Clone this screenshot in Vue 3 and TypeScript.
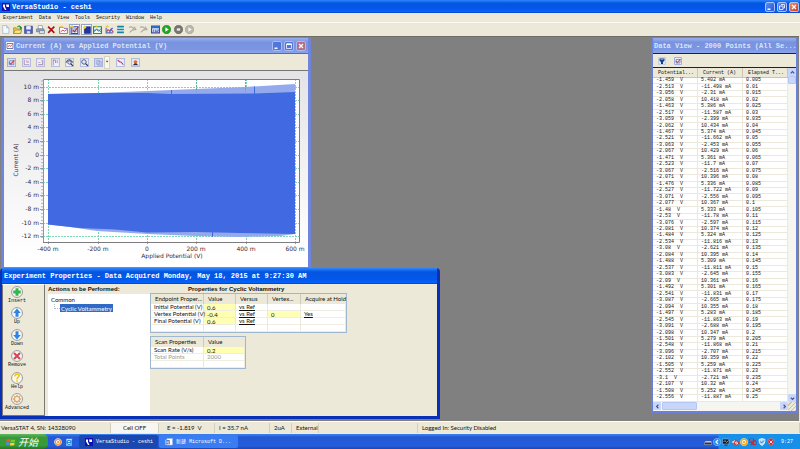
<script setup lang="ts">
import { h, type FunctionalComponent } from 'vue'

type Shape = [d: string, fill: string, stroke?: string, width?: number]

const icons: Record<string, Shape[]> = {
  new: [['M3 1h7l4 4v10H3z', '#f4f8ff', '#8fa3c4'], ['M10 1v4h4', '#c9d8ee', '#8fa3c4']],
  open: [['M1 5h5l2 2h6v8H1z', '#e8c84a', '#8a7420'], ['M4 9h12l-3 6H1z', '#ffe67a', '#8a7420'], ['M8 4c2-4 6-2 6 2m-2-2l2 3 2-3', 'none', '#2b8c2b', 2]],
  save: [['M1 2h14v13H1z', '#4f5fc4', '#2b3580'], ['M4 2h8v6H4z', '#eef2ff'], ['M5 11h6v4H5z', '#dfe4f5']],
  print: [['M4 1h7l1 6H4z', '#fff', '#6a7390'], ['M1 7h13v5H1z', '#9eaed0', '#4b5678'], ['M6 10h9v5H6z', '#dfe8fa', '#4b5678']],
  delete: [['M2 3l11 11M13 3L2 14', 'none', '#b01018', 3]],
  folder: [['M1 4h6l2 2h6v9H1z', '#fff', '#8a5ab0', 1.5], ['M3 12l4-3 3 2 4-3', 'none', '#c03030', 1.5], ['M1 4l4-3 3 3', '#e8cf32']],
  edit: [['M2 3h12v12H2z', '#fff', '#31459c', 2], ['M5 3v12M9 3v12M2 7h12M2 11h12', 'none', '#5a6cc0'], ['M5 9l3 3 7-9', 'none', '#c82828', 2], ['M0 2l4-2 3 3-4 2z', '#e8cf32']],
  sheet: [['M4 3h11v12H4z', '#2334a0', '#151f6c'], ['M1 4l4-4 3 4-3 3z', '#f4dc30']],
  graph: [['M1 3h14v12H1z', '#e8fff0', '#258a50', 2], ['M2 12l4-4 4 3 5-5', 'none', '#c03030', 1.5], ['M2 10l5-3 7 5', 'none', '#2878c8', 1.5], ['M5 0l4 2-4 2z', '#e8cf32']],
  curves: [['M2 5v9h12', 'none', '#5a6ac0', 2], ['M3 12c3-9 5 4 8-4l4 5', 'none', '#c83858', 2], ['M8 14c1-6 3-8 6-8', 'none', '#4070d0', 2], ['M1 2l4-2 2 4-4 1z', '#e8cf32']],
  rows: [['M2 1h12v14H2z', '#e2f5f8'], ['M2 3h12M2 8h12M2 13h12', 'none', '#17829c', 3]],
  tool: [['M2 4c4-2 8 1 9 4M11 3l3 5-5 1M3 13l6-5', 'none', '#aaa8a0', 2]],
  panel: [['M1 2h14v12H1z', '#fff', '#2850b0', 2], ['M1 2h14v4H1z', '#3268c8'], ['M3 8h3v2H3zM7 8h3v2H7zM11 8h3v2h-3zM3 11h3v2H3z', '#3268c8'], ['M7 11h6v2H7z', '#d03838']],
  play: [['M8 .5a7.5 7.5 0 1 0 .1 0z', '#22a522', '#167516'], ['M6 4l6 4-6 4z', '#fff']],
  stop: [['M8 .5a7.5 7.5 0 1 0 .1 0z', '#77756f', '#5a5852'], ['M5 6h6v4H5z', '#eee']],
  next: [['M8 .5a7.5 7.5 0 1 0 .1 0z', '#b9b7ae', '#9c9a92'], ['M6 4l6 4-6 4z', '#f7f6f0']],
  check: [['M1 1h14v14H1z', '#eaf0ff', '#9fb0dc', 2], ['M4 5h8v7H4z', 'none', '#6078c0', 1.5], ['M4 8l3 3 6-7', 'none', '#d8483c', 2.2]],
  axis: [['M1 1h14v14H1z', '#eef0fc', '#b2bce0', 2], ['M4 3v9h9', 'none', '#a080b0', 1.5], ['M7 5h2v4M11 5v4', 'none', '#d09098', 1.5]],
  axisr: [['M1 1h14v14H1z', '#eef0fc', '#b2bce0', 2], ['M4 12h8V4', 'none', '#a06890', 1.5], ['M4 8h4M9 5h2', 'none', '#c898a8', 1.5]],
  axisl: [['M1 1h14v14H1z', '#eef0fc', '#b2bce0', 2], ['M4 3v10M4 4h4v5M11 4v5', 'none', '#b07898', 1.5]],
  zoom: [['M1 1h14v14H1z', '#eef0fc', '#b2bce0', 2], ['M7 3a4 4 0 1 0 .1 0z', '#dce6fa', '#404860', 1.5], ['M10 10l4 4', 'none', '#303848', 2.5]],
  zoomx: [['M1 1h14v14H1z', '#eef0fc', '#b2bce0', 2], ['M2 8c4-8 8-5 12 0', 'none', '#405060', 2], ['M8 5a3 3 0 1 0 .1 0z', '#dce6fa', '#404860', 1.5], ['M10 10l4 4', 'none', '#303848', 2.5]],
  copy: [['M1 1h14v14H1z', '#dde4f8', '#a8b4e0', 2], ['M4 4h6v7H4zM7 6h6v7H7z', '#ccd7f3', '#8194c8']],
  line: [['M1 1h14v14H1z', '#eef0fc', '#b2bce0', 2], ['M3 4l4 3 2 0 4 5', 'none', '#c83858', 2]],
  peak: [['M1 1h14v14H1z', '#eef0fc', '#b2bce0', 2], ['M2 13c3 0 4-5 6-5s3 5 6 5z', '#30303a'], ['M4 7c2-4 6-4 8 0l-4 3z', '#e07030']],
  filter: [['M1 1h14v14H1z', '#d7e5fa', '#a8b9dc'], ['M3 3h10v4l-3 3v4H6v-4L3 7z', '#163e88'], ['M5 4h6v2H5z', '#4aa0d8']],
  chart: [['M1 1h14v14H1z', '#fff', '#fff', 2], ['M2 3h12v10H2z', '#fff', '#405090', 1.5], ['M4 10l3-4 2 3 4-4', 'none', '#d04040', 1.5]],
  versa: [['M0 0h16v16H0z', '#1010b4'], ['M2 3h4v5l3 6H6L2 7zM8 3h6v5H9z', '#fff']],
  insert: [['M8 .8a7.2 7.2 0 1 0 .1 0z', '#f6f6f4', '#8b8b92', 1.2], ['M6 3h4v3h3v4h-3v3H6v-3H3V6h3z', '#35b648']],
  up: [['M8 .8a7.2 7.2 0 1 0 .1 0z', '#f6f6f4', '#8b8b92', 1.2], ['M8 2l5 6h-3v5H6V8H3z', '#2c86e8']],
  down: [['M8 .8a7.2 7.2 0 1 0 .1 0z', '#f6f6f4', '#8b8b92', 1.2], ['M8 14l5-6h-3V3H6v5H3z', '#2c86e8']],
  remove: [['M8 .8a7.2 7.2 0 1 0 .1 0z', '#f6f6f4', '#8b8b92', 1.2], ['M4 4l8 8M12 4l-8 8', 'none', '#d84450', 2.8]],
  help: [['M8 .8a7.2 7.2 0 1 0 .1 0z', '#fbfae8', '#8b8b92', 1.2], ['M5 6c0-4 6-4 6-1 0 2-3 2-3 5M8 11v2', 'none', '#f0c41c', 2]],
  advanced: [['M8 .8a7.2 7.2 0 1 0 .1 0z', '#f6f6f4', '#8b8b92', 1.2], ['M8 4.5a3.5 3.5 0 1 0 .1 0zM8 2.5v2M8 11.5v2M2.5 8h2M11.5 8h2M4 4l1.5 1.5M12 4l-1.5 1.5M4 12l1.5-1.5M12 12l-1.5-1.5', '#fff1dc', '#e0a868', 1.8]],
  min: [['M3 11h6v3H3z', '#fff']],
  max: [['M3 4h10v9H3z', 'none', '#fff', 1.5], ['M3 3h10v3H3z', '#fff']],
  restore: [['M6 3h7v7h-2M3 6h7v7H3z', 'none', '#fff', 1.6]],
  close: [['M4 4l8 8M12 4l-8 8', 'none', '#fff', 2.4]],
  left: [['M10 4L6 8l4 4', 'none', '#3c5488', 2.6]],
  right: [['M6 4l4 4-4 4', 'none', '#3c5488', 2.6]],
  upward: [['M4 10l4-4 4 4', 'none', '#3c5488', 2.6]],
  downward: [['M4 6l4 4 4-4', 'none', '#3c5488', 2.6]],
  flag: [['M1 4c3-2 4-1 6 0L6 8c-2-1-4-1-6 0z', '#f05a28'], ['M8 4c3 1 5 1 7 0l-1 4c-2 1-4 1-7 0z', '#7cc832'], ['M0 9c2-1 4-1 6 0l-1 4c-2-1-4-1-6 0z', '#4a90f0'], ['M7 9c3 1 4 1 7 0l-1 4c-3 1-5 1-7 0z', '#fcd030']],
  media: [['M8 1a7 7 0 1 0 .1 0z', '#f08c28', '#fff', 1.2], ['M8 4a4 4 0 1 0 .1 0z', '#fff'], ['M7 5l4 3-4 3z', '#e07018']],
  ie: [['M3 2h10v13H3z', '#e8f4ff', '#90b8e8'], ['M12 9H4c0-6 8-6 8 0M4 9c0 5 6 5 8 2', 'none', '#1a88d8', 2.2], ['M12 2l3-1-2 3', '#f8e060']],
  word: [['M4 1h11v13H4z', '#fff', '#9fb4dc'], ['M1 4h9v9H1z', '#2e59b4', '#fff'], ['M3 6l1 5 1.5-4L7 11l1-5', 'none', '#fff', 1.2]],
  keyboard: [['M2 6h13v3H2z', '#e8e8e8', '#555'], ['M1 9h14v4H1z', '#303030', '#bbb']],
  hide: [['M8 .5a7.5 7.5 0 1 0 .1 0z', '#2c8cf0', '#9cd4ff'], ['M10 4L6 8l4 4', 'none', '#fff', 2.4]],
  monitor: [['M1 2h13v10H1z', '#101828', '#b8c4dc'], ['M3 8l3-3 3 4 4-4', 'none', '#d8e8ff', 1.2], ['M5 13h6v2H5z', '#202838']],
  sound: [['M1 6h3l4-4v12l-4-4H1z', '#d8d8d8', '#505868'], ['M11 6a4 4 0 1 0 .1 0z', '#f8f0f0', '#d82020', 2], ['M8 13l6-6', 'none', '#d82020', 1.5]],
  shield: [['M8 .5a7.5 7.5 0 1 0 .1 0z', '#f8a420', '#fff0a0'], ['M8 4a4 4 0 1 0 .1 0z', '#fff'], ['M8 6a2 2 0 1 0 .1 0z', '#f09010']],
  network: [['M1 2h8v7H1zM6 6h8v7H6z', '#6888c8', '#26386c'], ['M3 5l9 9M13 4l-9 10', 'none', '#d82430', 2.4]],
  guard: [['M8 1l6 2c0 7-2 10-6 12C4 13 2 10 2 3z', '#b8dcf4', '#f4fbff', 1.5], ['M5 7l2 3 5-5', 'none', '#2b74c4', 2]],
  alert: [['M8 1l6 2c0 7-2 10-6 12C4 13 2 10 2 3z', '#d82030', '#ff8c78'], ['M5 5l6 6M11 5l-6 6', 'none', '#fff', 1.8]],
}

const Icon: FunctionalComponent<{ name: string }> = (props) =>
  h('svg', { viewBox: '0 0 16 16', 'aria-hidden': 'true' },
    icons[props.name].map(([d, fill, stroke, width]) =>
      h('path', { d, fill, stroke: stroke ?? 'none', 'stroke-width': width ?? 1 })))
Icon.props = ['name']

const menus = ['Experiment', 'Data', 'View', 'Tools', 'Security', 'Window', 'Help']
const tools = ['new', 'open', 'save', 'print', 'delete', 'folder', 'edit', 'sheet', 'graph', 'curves', 'rows', 'tool', 'tool', 'panel', 'play', 'stop', 'next']
const chartTools = ['check', 'axis', 'axisr', 'axisl', 'zoomx', 'zoom', 'copy']
const actions = [
  ['insert', 'Insert'], ['up', 'Up'], ['down', 'Down'],
  ['remove', 'Remove'], ['help', 'Help'], ['advanced', 'Advanced'],
]
const tray = ['keyboard', 'hide', 'monitor', 'sound', 'shield', 'network', 'guard', 'alert']

const yTicks = [10, 8, 6, 4, 2, 0, -2, -4, -6, -8, -10, -12].map((v) => ({
  y: Math.round(154.5 - v * 6.8), label: v === 0 ? '0' : `${v} m`,
}))
const minorTicks = Array.from({ length: 47 }, (_, i) => 81 + i * 3.4)
const xTicks = [-400, -200, 0, 200, 400, 600].map((v) => ({
  x: Math.round(147 + v * 0.247), label: v === 0 ? '0' : `${v} m`,
}))

const potentials = `-1.459 -2.513 -3.056 -2.058 -1.463 -2.517 -3.059 -2.062 -1.467 -2.521 -3.063 -2.067 -1.471
-2.523 -3.067 -2.071 -1.476 -2.527 -3.071 -2.077 -1.48 -2.53 -3.076 -2.081 -1.484 -2.534 -3.08 -2.084 -1.488 -2.537
-3.083 -2.09 -1.492 -2.541 -3.087 -2.094 -1.497 -2.545 -3.091 -2.098 -1.501 -2.548 -3.096 -2.102 -1.505 -2.552 -3.1
-2.107 -1.508 -2.556`.split(/\s+/)
const currents = `5.402 -11.498 -2.31 10.418 5.386 -11.587 -2.399 10.434 5.374 -11.662 -2.453 10.429 5.361 -11.7
-2.516 10.396 5.336 -11.722 -2.556 10.367 5.333 -11.78 -2.597 10.374 5.324 -11.816 -2.621 10.395 5.309 -11.811 -2.645
10.361 5.301 -11.831 -2.665 10.355 5.283 -11.863 -2.688 10.347 5.279 -11.868 -2.707 10.359 5.259 -11.871 -2.721 10.32
5.252 -11.887`.split(/\s+/)
const points = potentials.map((p, i) => ({
  potential: `${p}  V`, current: `${currents[i]} mA`, elapsed: String(((i + 1) * 5) / 1000),
}))
</script>

<template>
  <div class="app">
    <header class="titlebar main-title">
      <Icon name="versa" class="i7" /><h1>VersaStudio - ceshi</h1>
      <button aria-label="Minimize"><Icon name="min" /></button>
      <button aria-label="Restore"><Icon name="restore" /></button>
      <button class="close" aria-label="Close"><Icon name="close" /></button>
    </header>
    <nav class="menu"><button v-for="m in menus" :key="m">{{ m }}</button></nav>
    <div class="toolbar">
      <button v-for="(t, i) in tools" :key="i" :aria-label="t" :class="{ pressed: i === 6 || i === 7 }"><Icon :name="t" /></button>
    </div>

    <main class="desk">
      <section class="window chart-window">
        <header class="titlebar idle">
          <Icon name="chart" class="i7" /><h2>Current (A) vs Applied Potential (V)</h2>
          <button aria-label="Minimize"><Icon name="min" /></button>
          <button aria-label="Maximize"><Icon name="max" /></button>
          <button class="close" aria-label="Close"><Icon name="close" /></button>
        </header>
        <div class="chart-tools">
          <div class="tool-group">
            <button v-for="t in chartTools" :key="t" :aria-label="t"><Icon :name="t" /></button>
          </div>
          <button class="drop" aria-label="Copy options">▾</button>
          <button aria-label="line"><Icon name="line" /></button>
          <button aria-label="peak"><Icon name="peak" /></button>
        </div>
        <svg class="plot" viewBox="4 71 304 195" preserveAspectRatio="xMinYMin meet">
          <rect x="43" y="79" width="257" height="163" fill="#fff" />
          <g stroke="#7fd6b4" stroke-dasharray="2 1">
            <line v-for="t in yTicks" :key="t.y" x1="43" x2="300" :y1="t.y + 0.5" :y2="t.y + 0.5" />
            <line v-for="t in xTicks" :key="t.x" y1="79" y2="242" :x1="t.x + 0.5" :x2="t.x + 0.5" />
          </g>
          <path d="M48 94L97 93 147 91 196 89 245 87 295 84V234L280 236 240 237 196 236 147 234 97 231 70 227 48 224.5z" fill="#94aaec" />
          <path d="M48 94L100 93H147L170 94 255 93.5 295 92V234L240 233 196 232 147 232.5 115 229.5 80 228 48 224.5z" fill="#4169e1" />
          <path d="M171.5 90v5M254.5 86.5v9M212.5 231v6" stroke="#4169e1" />
          <g stroke="#55b594" stroke-dasharray="2 1">
            <line x1="196.5" x2="196.5" y1="79" y2="92" /><line x1="245.5" x2="245.5" y1="79" y2="92" />
          </g>
          <g stroke="#9a9aac">
            <line v-for="y in minorTicks" :key="y" x1="41" x2="43" :y1="y" :y2="y" stroke-width="0.7" />
            <line v-for="t in yTicks" :key="t.y" x1="40" x2="43" :y1="t.y + 0.5" :y2="t.y + 0.5" />
            <line v-for="t in xTicks" :key="t.x" y1="242" y2="244" :x1="t.x + 0.5" :x2="t.x + 0.5" />
          </g>
          <path d="M43.5 242V79.5H299.5V242.5H43" fill="none" stroke="#7c7c80" />
          <path d="M43.5 80v162" stroke="#7d93e0" />
          <g class="ticks">
            <text v-for="t in yTicks" :key="t.y" x="39" :y="t.y + 2" text-anchor="end">{{ t.label }}</text>
            <text v-for="t in xTicks" :key="t.x" :x="t.x" y="251" text-anchor="middle">{{ t.label }}</text>
            <text x="172" y="258" text-anchor="middle">Applied Potential (V)</text>
            <text x="-160" y="18" text-anchor="middle" transform="rotate(-90)">Current (A)</text>
          </g>
        </svg>
      </section>

      <section class="window data-window">
        <header class="titlebar idle"><h2>Data View - 2000 Points (All Se...</h2></header>
        <div class="data-tools">
          <button aria-label="Filter"><Icon name="filter" /></button>
          <button aria-label="Select"><Icon name="check" /></button>
        </div>
        <div class="grid-area">
          <div class="table-box">
            <table class="points">
              <thead><tr><th>Potential...</th><th>Current (A)</th><th>Elapsed T...</th></tr></thead>
              <tbody>
                <tr v-for="p in points" :key="p.elapsed"><td>{{ p.potential }}</td><td>{{ p.current }}</td><td>{{ p.elapsed }}</td></tr>
              </tbody>
            </table>
          </div>
          <div class="vbar">
            <button aria-label="Scroll up"><Icon name="upward" /></button><span class="thumb"></span>
            <button aria-label="Scroll down"><Icon name="downward" /></button>
          </div>
          <div class="hbar">
            <button aria-label="Scroll left"><Icon name="left" /></button><span class="thumb"></span>
            <button aria-label="Scroll right"><Icon name="right" /></button>
          </div>
          <span class="corner"></span>
        </div>
      </section>

      <section class="window props-window">
        <header class="titlebar"><h2>Experiment Properties - Data Acquired Monday, May 18, 2015 at 9:27:30 AM</h2></header>
        <div class="props">
          <div class="side">
            <button v-for="[icon, label] in actions" :key="icon"><Icon :name="icon" />{{ label }}</button>
          </div>
          <div class="acts">
            <h3>Actions to be Performed:</h3>
            <ul><li>Common<ul><li><span class="picked">Cyclic Voltammetry</span></li></ul></li></ul>
          </div>
          <div class="sheets">
            <h3>Properties for Cyclic Voltammetry</h3>
            <table class="sheet endpoint">
              <thead><tr><th>Endpoint Proper...</th><th>Value</th><th>Versus</th><th>Vertex...</th><th>Acquire at Hold</th></tr></thead>
              <tbody>
                <tr><td>Initial Potential (V)</td><td class="edit"><input value="0.6" aria-label="Initial Potential (V)" /></td><td><a href="#">vs Ref</a></td><td></td><td></td></tr>
                <tr><td>Vertex Potential (V)</td><td class="edit"><input value="-0.4" aria-label="Vertex Potential (V)" /></td><td><a href="#">vs Ref</a></td><td class="edit"><input value="0" aria-label="Vertex" /></td><td><a href="#">Yes</a></td></tr>
                <tr><td>Final Potential (V)</td><td class="edit"><input value="0.6" aria-label="Final Potential (V)" /></td><td><a href="#">vs Ref</a></td><td></td><td></td></tr>
                <tr><td></td><td></td><td></td><td></td><td></td></tr>
              </tbody>
            </table>
            <table class="sheet scan">
              <thead><tr><th>Scan Properties</th><th>Value</th></tr></thead>
              <tbody>
                <tr><td>Scan Rate (V/s)</td><td class="edit"><input value="0.2" aria-label="Scan Rate (V/s)" /></td></tr>
                <tr class="off"><td>Total Points</td><td>2000</td></tr>
                <tr><td></td><td></td></tr>
              </tbody>
            </table>
          </div>
        </div>
      </section>
    </main>

    <div class="status">
      <span>VersaSTAT 4, SN: 14328090</span><span class="cell">Cell OFF</span><span>E = -1.819&nbsp; V</span>
      <span>I = 35.7 nA</span><span>2uA</span><span>External</span><span></span><span>Logged In: Security Disabled</span>
    </div>

    <footer class="taskbar">
      <button class="start"><Icon name="flag" />开始</button>
      <div class="quick">
        <button aria-label="Media player"><Icon name="media" /></button>
        <button aria-label="Browser"><Icon name="ie" /></button>
      </div>
      <button class="task current"><Icon name="versa" />VersaStudio - ceshi</button>
      <button class="task"><Icon name="word" />新建 Microsoft D...</button>
      <div class="tray"><Icon v-for="t in tray" :key="t" :name="t" /><time>9:27</time></div>
    </footer>
  </div>
</template>

<style>
body { margin: 0; }
</style>

<style scoped>
.app {
  --mono: "Liberation Mono", "Noto Sans CJK SC", monospace;
  --sans: Lato, "Liberation Sans", sans-serif;
  display: flex; flex-direction: column; height: 100vh; min-height: 440px; overflow: hidden;
  background: #ece9d8; color: #111; font: 5px/6px var(--mono);
}
* { box-sizing: border-box; }
button { display: flex; align-items: center; justify-content: center; margin: 0; padding: 0; border: 0; background: none; color: inherit; font: inherit; }
h1, h2, h3 { margin: 0; font: inherit; white-space: nowrap; }
svg { display: block; flex: none; }
.i7 { width: 8px; height: 8px; }
.titlebar {
  display: flex; align-items: center; gap: 2px; flex: none; height: 15px; padding: 0 2px; color: #fff;
  background: linear-gradient(#2f86fa, #0355e2 25%, #0358ea 70%, #0563fb 90%, #0340c0);
}
.titlebar h1, .titlebar h2 { flex: 1; font: bold 7px/10px var(--mono); }
.titlebar button { width: 10px; height: 10px; border: 1px solid #a9c3fa; border-radius: 2px; background: linear-gradient(135deg, #5b90f5, #2254d8); }
.titlebar button svg { width: 8px; height: 8px; }
.titlebar .close { background: linear-gradient(135deg, #f09070, #cc3a18); }
.main-title { height: 13px; padding: 0 1px 0 2px; }
.idle { height: 15px; color: #d8e4f8; background: linear-gradient(#98aeee, #7892de 30%, #7b96e2 75%, #8ba4ec); }
.titlebar.idle .close { background: #b86c82; }
.idle button { border-color: #a8bcf4; background: #5076dc; }
.menu { display: flex; flex: none; align-items: center; gap: 6px; height: 10px; padding: 0 3px; border-bottom: 1px solid #fbfaf4; }
.toolbar { display: flex; flex: none; align-items: center; justify-content: space-between; width: 195px; height: 13px; }
.toolbar button { width: 11px; height: 11px; }
.toolbar button svg { width: 9px; height: 9px; }
.toolbar .pressed { border: 1px solid #8ea4cc; background: #fff; }
.desk { position: relative; flex: 1; min-height: 0; margin-right: 1px; border-top: 1px solid #6f6d68; background: #808080; overflow: hidden; }
.window { position: absolute; display: flex; flex-direction: column; background: #ece9d8; }
.chart-window { left: 1px; top: 0; width: 310px; height: 233px; border: 3px solid #6f84dc; border-top-width: 1px; border-radius: 4px 4px 0 0; }
.chart-tools { display: flex; align-items: center; gap: 6px; height: 17px; padding: 0 3px; border-top: 1px solid #666a80; }
.tool-group { display: flex; justify-content: space-between; width: 96px; }
.chart-tools button { width: 9px; height: 9px; }
.chart-tools button svg { width: 9px; height: 9px; }
.chart-tools .drop { width: 6px; height: 13px; margin-left: -5px; border: 1px solid #d5d2c2; background: #f8f7f1; }
.plot { width: 100%; flex: 1; min-height: 0; border-top: 1px solid #777; background: linear-gradient(#e4e4e6, #fff 95%); }
.ticks { fill: #3c2838; font: 6px "DejaVu Sans", sans-serif; }
.data-window { right: 1px; top: 0; width: 147px; height: 376px; border: 2px solid #6a80dc; border-top-width: 1px; border-radius: 4px 4px 0 0; }
.data-window .titlebar { padding: 0 1px; }
.data-tools { display: flex; flex: none; align-items: center; gap: 8px; height: 15px; padding: 0 5px; border-top: 1px solid #222; border-bottom: 1px solid #222; }
.data-tools button, .data-tools svg { width: 8px; height: 8px; }
.grid-area { display: grid; flex: 1; min-height: 0; grid-template: 1fr 9px / 1fr 8px; background: #fff; }
.table-box { min-height: 0; overflow: hidden; }
.points { width: 100%; height: 100%; table-layout: fixed; border-collapse: separate; border-spacing: 0; }
.points th { height: 10px; padding: 0 0 0 5px; border-right: 1px solid #c9c5b2; border-bottom: 1px solid #c9c5b2; background: #ece9d8; font-weight: normal; text-align: left; }
.points td { padding: 0 0 0 3px; border-right: 1px solid #ece9dc; border-bottom: 1px solid #ece9dc; line-height: 5px; white-space: pre; }
.vbar, .hbar { display: flex; background: #f6f5f0; }
.vbar { flex-direction: column; }
.vbar button, .hbar button { width: 8px; height: 8px; border-radius: 1px; background: #c8d6fb; }
.vbar svg, .hbar svg { width: 7px; height: 7px; }
.thumb { border: 1px solid #b4c6f4; border-radius: 1px; background: #c8d6fb; }
.vbar .thumb { height: 8px; margin-bottom: auto; }
.hbar .thumb { width: 35px; margin: 0 auto 1px 1px; }
.corner { background: repeating-linear-gradient(135deg, #ece9d8 0 2px, #c5c1ad 2px 3px); }
.props-window { left: 0; top: 231px; width: 440px; height: 151px; border: 1px solid #0831b8; border-width: 0 3px 3px 2px; border-radius: 4px 4px 0 0; font-family: var(--sans); }
.props-window .titlebar { height: 16px; }
.props { display: flex; flex: 1; min-height: 0; }
.side { display: flex; flex-direction: column; justify-content: space-between; width: 43px; margin-right: 3px; padding: 1px 13px 4px 0; border: 1px solid #777; border-top-color: #fff; font-family: var(--mono); }
.side button { flex-direction: column; }
.side svg { width: 12px; height: 12px; }
h3 { font: bold 6px/8px "Liberation Sans", sans-serif; color: #111; }
.acts { display: flex; flex-direction: column; width: 102px; padding-top: 1px; font-size: 6px; line-height: 8px; }
.acts > ul { flex: 1; margin-top: 1px; padding: 2px 3px; background: #fff; }
ul { margin: 0; padding: 0 0 0 8px; list-style: none; }
li li::before { content: ""; display: inline-block; width: 5px; height: 4px; margin: 0 0 2px -5px; border-left: 1px dotted #bbb; border-bottom: 1px dotted #bbb; }
.picked { padding: 1px 1px 0; background: #316ac5; color: #fff; }
.sheets { padding-top: 1px; }
.sheets h3 { padding-left: 38px; }
.sheet { table-layout: fixed; border: 1px solid #9fb6cf; border-collapse: separate; border-spacing: 0; background: #fff; font-size: 6px; line-height: 6px; }
.endpoint { width: 197px; }
.scan { width: 96px; margin-top: 3px; }
.sheet th { height: 10px; padding: 0 0 0 4px; border-right: 1px solid #cfcbb8; background: #ece9d8; font-weight: normal; text-align: left; white-space: nowrap; }
.sheet th:last-child { border-right: 0; }
.sheet td { height: 7px; padding: 0 0 0 3px; border-right: 1px solid #ece9d8; border-bottom: 1px solid #f0eee0; white-space: nowrap; }
.endpoint th:nth-child(1), .scan th:nth-child(1) { width: 53px; }
.endpoint th:nth-child(2), .endpoint th:nth-child(3) { width: 32px; }
.endpoint th:nth-child(4) { width: 33px; }
.sheet .edit { background: #ffffb4; }
.sheet input { display: block; width: 100%; height: 6px; padding: 0; border: 0; background: none; color: inherit; font: inherit; }
.sheet a { color: inherit; text-decoration: underline; }
.off { color: #999; }
.status { display: grid; flex: none; grid-template-columns: 111px 52px 52px 55px 22px 27px 99px 1fr; align-items: center; height: 13px; border-top: 1px solid #fff; font: 6px/10px var(--sans); white-space: nowrap; }
.status span { height: 10px; padding: 0 0 0 4px; border-right: 1px solid #d2cfbf; }
.status span:first-child { padding-left: 1px; }
.status .cell { margin-right: 4px; padding: 0; background: #f7f6f2; text-align: center; }
.taskbar { display: flex; flex: none; align-items: stretch; height: 15px; color: #fff; background: linear-gradient(#3d86f0, #2458d4 20%, #245edc 80%, #1c48b4); }
.start { gap: 2px; width: 48px; padding-right: 4px; border-radius: 0 5px 5px 0; background: linear-gradient(#60b860, #379837 25%, #389c38 75%, #257525); font: italic 10px/12px "Noto Sans CJK SC", sans-serif; }
.start svg { width: 10px; height: 10px; }
.quick { display: flex; align-items: center; gap: 3px; width: 31px; padding-left: 6px; }
.quick svg { width: 8px; height: 8px; }
.task { gap: 3px; justify-content: flex-start; width: 79px; margin: 1px 1px 1px 0; padding-left: 6px; border-radius: 2px; background: #3a7cf2; white-space: nowrap; }
.task svg { width: 8px; height: 8px; }
.current { background: #1a48b0; }
.tray { display: flex; align-items: center; gap: 1px; margin-left: auto; padding-right: 7px; background: linear-gradient(90deg, transparent 14px, #1790ea 15px); }
.tray svg { width: 8px; height: 8px; }
.tray time { margin-left: 5px; }
</style>
